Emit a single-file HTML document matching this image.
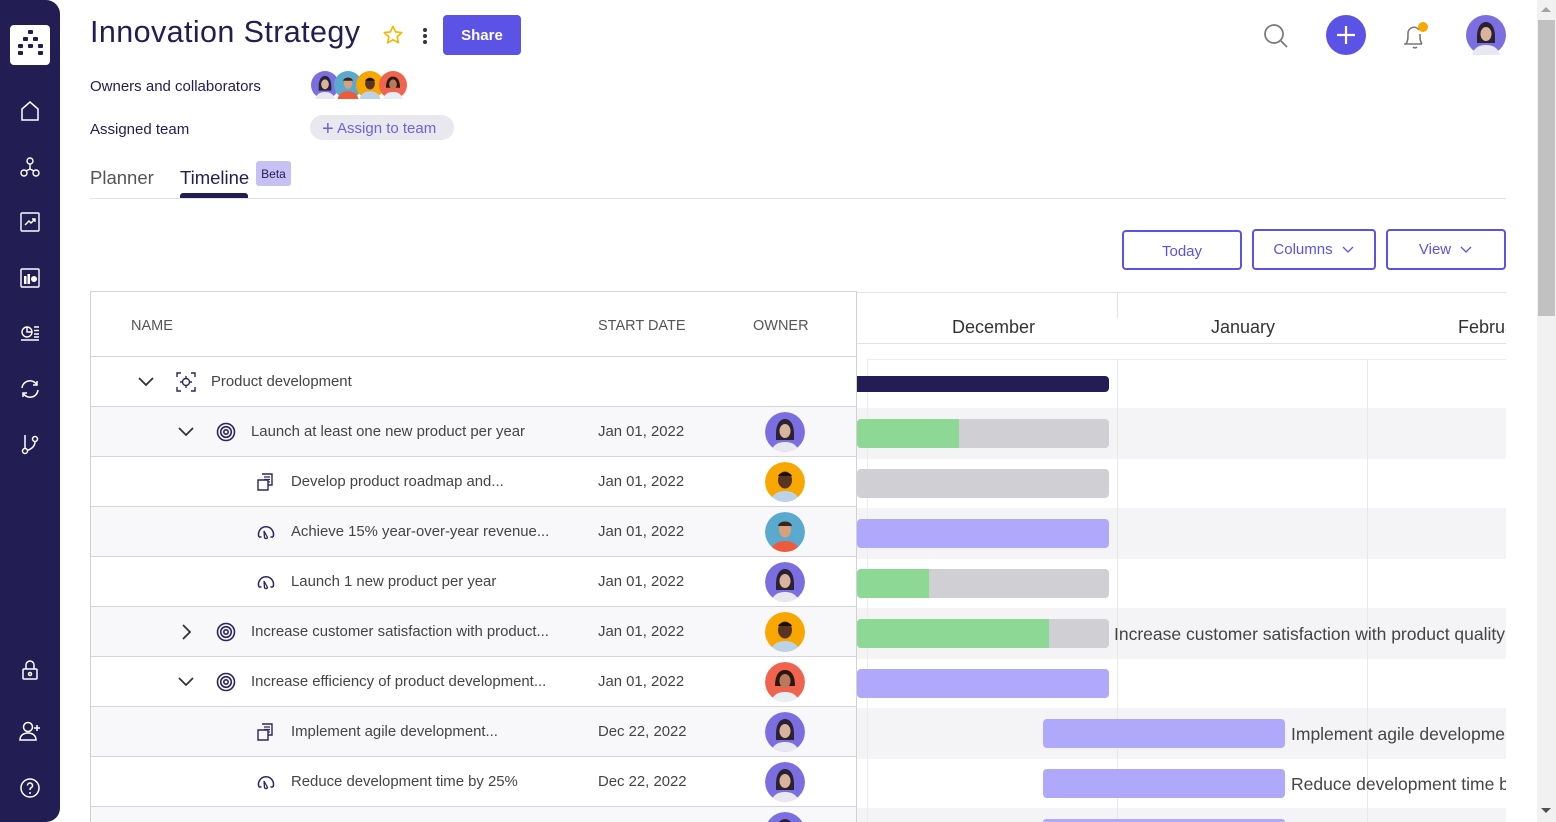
<!DOCTYPE html>
<html><head><meta charset="utf-8"><style>
*{margin:0;padding:0;box-sizing:border-box}
html{width:1556px;height:822px;overflow:hidden}
body{width:1556px;height:822px;overflow:hidden;background:#fff;font-family:"Liberation Sans",sans-serif;position:relative;color:#333}
.a{position:absolute}
.side{left:0;top:0;width:60px;height:822px;background:#221d52;border-radius:0 14px 14px 0}
.ic{position:absolute;left:19px;width:22px;height:22px}
.btn{position:absolute;border:2px solid #5b52e6;border-radius:4px;color:#5b52e6;font-size:15px;display:flex;align-items:center;justify-content:center;background:#fff}
.row{position:absolute;left:91px;width:765px;height:50px;border-bottom:1px solid #d6d6d6}
.sh{background:#f8f7fa}
.t{position:absolute;font-size:14.9px;color:#444;top:17px;white-space:nowrap}
.d{left:507px}
.band{position:absolute;left:857px;width:649px;height:51px;background:#f4f3f6}
.bar{position:absolute;height:29px;border-radius:4px;overflow:hidden}
.gl{position:absolute;font-size:17.5px;color:#444;white-space:nowrap}
.av{position:absolute;width:40px;height:40px;border-radius:50%;overflow:hidden}
</style></head><body>
<svg width="0" height="0" style="position:absolute">
<defs>
<symbol id="avp" viewBox="0 0 40 40"><circle cx="20" cy="20" r="20" fill="#7b6ee0"/><path d="M11 22c0-10 4-15 9-15s9 5 9 15v6H11z" fill="#2a2230"/><ellipse cx="20" cy="19" rx="5.5" ry="7" fill="#d9b39c"/><path d="M6 40c2-8 8-10 14-10s12 2 14 10z" fill="#e8e8f2"/></symbol>
<symbol id="avo" viewBox="0 0 40 40"><circle cx="20" cy="20" r="20" fill="#f7a700"/><ellipse cx="20" cy="18" rx="7" ry="8.5" fill="#5a3420"/><path d="M13 14c2-5 12-5 14 0" fill="#1a1010"/><path d="M5 40c2-8 8-11 15-11s13 3 15 11z" fill="#bcd2e8"/></symbol>
<symbol id="avt" viewBox="0 0 40 40"><circle cx="20" cy="20" r="20" fill="#5aa9cf"/><ellipse cx="20" cy="18" rx="6" ry="7.5" fill="#d9a07e"/><path d="M13 14c1-6 13-6 14 0" fill="#3a2518"/><path d="M5 40c2-8 8-11 15-11s13 3 15 11z" fill="#f05a3c"/></symbol>
<symbol id="avr" viewBox="0 0 40 40"><circle cx="20" cy="20" r="20" fill="#f0644f"/><path d="M10 24c0-11 4-16 10-16s10 5 10 16z" fill="#2a1810"/><ellipse cx="20" cy="19" rx="5.5" ry="7" fill="#b77a5a"/><path d="M6 40c2-8 8-10 14-10s12 2 14 10z" fill="#e7eef4"/></symbol>
<symbol id="tgt" viewBox="0 0 20 20"><circle cx="10" cy="10" r="8.5" fill="none" stroke="#2b2660" stroke-width="1.6"/><circle cx="10" cy="10" r="5.3" fill="none" stroke="#2b2660" stroke-width="1.6"/><circle cx="10" cy="10" r="2.2" fill="none" stroke="#2b2660" stroke-width="1.6"/></symbol>
<symbol id="doc" viewBox="0 0 20 20"><path d="M6 2h10v11H12" fill="none" stroke="#2b2660" stroke-width="1.4"/><path d="M2 8h10v10H2z" fill="none" stroke="#2b2660" stroke-width="1.4"/><path d="M8 5h6M8 7.5h6M12 10h2" stroke="#2b2660" stroke-width="1.2"/></symbol>
<symbol id="gau" viewBox="0 0 20 20"><path d="M3 15a7.5 7.5 0 1 1 14 0" fill="none" stroke="#2b2660" stroke-width="1.5"/><path d="M3 15h2.5M17 15h-2.5" stroke="#2b2660" stroke-width="1.5"/><path d="M8 9l3.5 6.5a1.6 1.6 0 0 1-3 0z" fill="none" stroke="#2b2660" stroke-width="1.3"/></symbol>
<symbol id="cd" viewBox="0 0 20 20"><path d="M3 6l7 7 7-7" fill="none" stroke="#333" stroke-width="1.8"/></symbol>
<symbol id="cr" viewBox="0 0 20 20"><path d="M7 3l7 7-7 7" fill="none" stroke="#333" stroke-width="1.8"/></symbol>
</defs></svg>

<div class="a side"></div>
<div class="a" style="left:10px;top:25px;width:40px;height:40px;background:#fff;border-radius:4px"></div>
<svg class="a" style="left:10px;top:25px" width="40" height="40"><g fill="#221d52"><rect x="18" y="5" width="5" height="4" rx="1"/><rect x="13" y="12" width="5" height="4" rx="1"/><rect x="23" y="12" width="5" height="4" rx="1"/><rect x="8" y="19" width="5" height="4" rx="1"/><rect x="18" y="19" width="5" height="4" rx="1"/><rect x="28" y="19" width="5" height="4" rx="1"/><rect x="8" y="26" width="5" height="4" rx="1"/><rect x="28" y="26" width="5" height="4" rx="1"/></g></svg>
<svg class="ic" style="top:100px" viewBox="0 0 22 22"><path d="M3 9l8-7 8 7v11H3z" fill="none" stroke="#fff" stroke-width="1.5"/></svg>
<svg class="ic" style="top:156px" viewBox="0 0 22 22"><g fill="none" stroke="#fff" stroke-width="1.4"><circle cx="11" cy="5" r="3"/><circle cx="5" cy="17" r="3"/><circle cx="17" cy="17" r="3"/><path d="M11 8v5M11 13l-4 2M11 13l4 2"/></g></svg>
<svg class="ic" style="top:211px" viewBox="0 0 22 22"><g fill="none" stroke="#fff" stroke-width="1.4"><rect x="2" y="2" width="18" height="18" rx="1"/><path d="M6 14l4-4 2 2 4-4M13 8h3v3"/></g></svg>
<svg class="ic" style="top:267px" viewBox="0 0 22 22"><g fill="none" stroke="#fff" stroke-width="1.4"><rect x="2" y="2" width="18" height="18" rx="1"/></g><g fill="#fff"><rect x="5" y="9" width="2.5" height="8"/><rect x="8.5" y="7" width="2.5" height="10"/><circle cx="15" cy="12" r="3"/></g></svg>
<svg class="ic" style="top:322px" viewBox="0 0 22 22"><g fill="none" stroke="#fff" stroke-width="1.4"><circle cx="8" cy="10" r="5"/><path d="M8 5v5h5M2 18h18M15 5h5M15 8.5h5M15 12h5M15 15h5"/></g></svg>
<svg class="ic" style="top:378px" viewBox="0 0 22 22"><g fill="none" stroke="#fff" stroke-width="1.5"><path d="M3 10a8 8 0 0 1 15-3M19 12a8 8 0 0 1-15 3"/><path d="M18 3v4h-4M4 19v-4h4"/></g></svg>
<svg class="ic" style="top:433px" viewBox="0 0 22 22"><g fill="none" stroke="#fff" stroke-width="1.5"><path d="M6 2v13"/><circle cx="6" cy="18" r="2.5"/><circle cx="16" cy="6" r="2.5"/><path d="M16 8.5c0 6-5 8-8 9"/></g></svg>
<svg class="ic" style="top:659px" viewBox="0 0 22 22"><g fill="none" stroke="#fff" stroke-width="1.5"><rect x="4" y="10" width="14" height="10" rx="1"/><path d="M7 10V6a4 4 0 0 1 8 0v4"/><circle cx="11" cy="15" r="1.5"/></g></svg>
<svg class="ic" style="top:720px" viewBox="0 0 22 22"><g fill="none" stroke="#fff" stroke-width="1.5"><circle cx="9" cy="7" r="4.5"/><path d="M1 20c0-5 4-7 8-7s8 2 8 7zM18 5v6M15 8h6"/></g></svg>
<svg class="ic" style="top:777px" viewBox="0 0 22 22"><g fill="none" stroke="#fff" stroke-width="1.5"><circle cx="11" cy="11" r="9"/><path d="M8.5 8.5a2.5 2.5 0 1 1 3.5 2.3c-1 .5-1 1-1 2.2"/></g><circle cx="11" cy="16" r="1" fill="#fff"/></svg>

<div class="a" style="left:90px;top:15px;font-size:30.5px;color:#221d52;letter-spacing:0.4px">Innovation Strategy</div>
<svg class="a" style="left:382px;top:24px" width="22" height="22" viewBox="0 0 24 24"><path d="M12 2.5l2.9 6.2 6.6.7-5 4.5 1.4 6.6L12 17.2l-5.9 3.3 1.4-6.6-5-4.5 6.6-.7z" fill="none" stroke="#f5b800" stroke-width="1.8" stroke-linejoin="round"/></svg>
<div class="a" style="left:423px;top:28px;width:4px;height:4px;background:#333;border-radius:50%;box-shadow:0 6px 0 #333,0 12px 0 #333"></div>
<div class="a" style="left:443px;top:15px;width:78px;height:40px;background:#5b52e6;border-radius:4px;color:#fff;font-size:15px;font-weight:bold;display:flex;align-items:center;justify-content:center">Share</div>

<div class="a" style="left:90px;top:78px;font-size:15px;color:#221d52">Owners and collaborators</div>
<svg class="a" style="left:311px;top:71px" width="28" height="28"><use href="#avp"/></svg>
<svg class="a" style="left:334px;top:71px" width="28" height="28"><use href="#avt"/></svg>
<svg class="a" style="left:356px;top:71px" width="28" height="28"><use href="#avo"/></svg>
<svg class="a" style="left:379px;top:71px" width="28" height="28"><use href="#avr"/></svg>
<div class="a" style="left:90px;top:121px;font-size:15px;color:#221d52">Assigned team</div>
<div class="a" style="left:310px;top:115px;width:144px;height:25px;background:#e9e8ee;border-radius:13px;color:#6b62e0;font-size:15px;line-height:27px;padding-left:12px"><span style="font-size:20px;vertical-align:-2px">+</span> Assign to team</div>

<div class="a" style="left:90px;top:167px;font-size:18.5px;color:#555">Planner</div>
<div class="a" style="left:180px;top:167px;font-size:18.5px;color:#221d52">Timeline</div>
<div class="a" style="left:256px;top:161px;width:35px;height:25px;background:#c7c0f5;border-radius:3px;font-size:12px;color:#221d52;line-height:27px;text-align:center">Beta</div>
<div class="a" style="left:180px;top:193px;width:68px;height:5px;background:#221d52;border-radius:3px 3px 0 0"></div>
<div class="a" style="left:90px;top:198px;width:1416px;height:1px;background:#e2e2e2"></div>

<svg class="a" style="left:1262px;top:22px" width="28" height="28" viewBox="0 0 28 28"><circle cx="12" cy="12" r="9" fill="none" stroke="#777" stroke-width="1.7"/><path d="M19 19l6 6" stroke="#777" stroke-width="1.7"/></svg>
<div class="a" style="left:1326px;top:15px;width:40px;height:40px;border-radius:50%;background:#5b52e6"></div>
<svg class="a" style="left:1326px;top:15px" width="40" height="40"><path d="M20 11v18M11 20h18" stroke="#fff" stroke-width="2.2"/></svg>
<svg class="a" style="left:1400px;top:18px" width="32" height="34" viewBox="0 0 32 34"><path d="M4 26h18M6 26c2-3 2-6 2-11a6 6 0 0 1 11-3M20 16c0 5 0 7 2 10M13 29a3 3 0 0 0 4 0" fill="none" stroke="#777" stroke-width="1.6"/><circle cx="23" cy="9" r="5" fill="#f7a700"/></svg>
<svg class="a" style="left:1466px;top:15px" width="40" height="40"><use href="#avp"/></svg>

<div class="a" style="left:1537px;top:0;width:19px;height:822px;background:#f1f1f1"></div>
<div class="a" style="left:1538px;top:20px;width:17px;height:296px;background:#c1c1c1"></div>
<div class="a" style="left:1541px;top:7px;border:5px solid transparent;border-bottom:5px solid #a3a3a3;border-top:0"></div>
<div class="a" style="left:1541px;top:808px;border:5px solid transparent;border-top:5px solid #505050;border-bottom:0"></div>

<div class="btn" style="left:1122px;top:230px;width:120px;height:40px;padding-top:2px">Today</div>
<div class="btn" style="left:1252px;top:229px;width:124px;height:41px">Columns <svg width="14" height="10" style="margin-left:8px"><path d="M2 2l5 5 5-5" fill="none" stroke="#5b52e6" stroke-width="1.3"/></svg></div>
<div class="btn" style="left:1386px;top:229px;width:120px;height:41px">View <svg width="14" height="10" style="margin-left:8px"><path d="M2 2l5 5 5-5" fill="none" stroke="#5b52e6" stroke-width="1.3"/></svg></div>

<!-- table -->
<div class="a" style="left:90px;top:291px;width:767px;height:531px;border:1px solid #d2d2d2;border-bottom:0"></div>
<div class="a" style="left:91px;top:356px;width:765px;height:1px;background:#d2d2d2"></div>
<div class="a" style="left:131px;top:318px;font-size:14.5px;color:#555">NAME</div>
<div class="a" style="left:598px;top:318px;font-size:14.5px;color:#555">START DATE</div>
<div class="a" style="left:753px;top:318px;font-size:14.5px;color:#555">OWNER</div>

<!-- gantt backgrounds -->
<div class="a" style="left:857px;top:292px;width:649px;height:1px;background:#e2e2e2"></div>
<div class="a" style="left:857px;top:343px;width:649px;height:1px;background:#e2e2e2"></div>
<div class="a" style="left:1117px;top:292px;width:1px;height:26px;background:#e2e2e2"></div>
<div class="a" style="left:952px;top:317px;font-size:18px;color:#333">December</div>
<div class="a" style="left:1211px;top:317px;font-size:18px;color:#333">January</div>
<div class="a" style="left:1458px;top:317px;font-size:18px;color:#333;width:48px;overflow:hidden;white-space:nowrap">February</div>
<div class="a" style="left:867px;top:359px;width:639px;height:1px;background:#ececec"></div>
<div class="band" style="top:408px"></div>
<div class="band" style="top:508px"></div>
<div class="band" style="top:608px"></div>
<div class="band" style="top:708px"></div>
<div class="band" style="top:808px;height:14px"></div>
<div class="a" style="left:867px;top:359px;width:1px;height:463px;background:#ececec"></div>
<div class="a" style="left:1117px;top:359px;width:1px;height:463px;background:#e8e8e8"></div>
<div class="a" style="left:1367px;top:359px;width:1px;height:463px;background:#e8e8e8"></div>

<!-- rows -->
<div class="row" style="top:357px"><svg class="a" style="left:45px;top:15px" width="20" height="20"><use href="#cd"/></svg>
<svg class="a" style="left:85px;top:15px" width="20" height="20" viewBox="0 0 20 20"><g fill="none" stroke="#2b2660" stroke-width="1.4"><path d="M1 5V1h4M15 1h4v4M19 15v4h-4M5 19H1v-4"/><circle cx="10" cy="10" r="3.5"/><path d="M10 4v2.5M10 13.5V16M4 10h2.5M13.5 10H16"/></g></svg>
<div class="t" style="left:120px">Product development</div></div>

<div class="row sh" style="top:407px"><svg class="a" style="left:85px;top:15px" width="20" height="20"><use href="#cd"/></svg><svg class="a" style="left:125px;top:15px" width="20" height="20"><use href="#tgt"/></svg><div class="t" style="left:160px">Launch at least one new product per year</div><div class="t d">Jan 01, 2022</div><svg class="av" style="left:674px;top:5px" width="40" height="40"><use href="#avp"/></svg></div>

<div class="row" style="top:457px"><svg class="a" style="left:165px;top:15px" width="20" height="20"><use href="#doc"/></svg><div class="t" style="left:200px">Develop product roadmap and...</div><div class="t d">Jan 01, 2022</div><svg class="av" style="left:674px;top:5px" width="40" height="40"><use href="#avo"/></svg></div>

<div class="row sh" style="top:507px"><svg class="a" style="left:165px;top:15px" width="20" height="20"><use href="#gau"/></svg><div class="t" style="left:200px">Achieve 15% year-over-year revenue...</div><div class="t d">Jan 01, 2022</div><svg class="av" style="left:674px;top:5px" width="40" height="40"><use href="#avt"/></svg></div>

<div class="row" style="top:557px"><svg class="a" style="left:165px;top:15px" width="20" height="20"><use href="#gau"/></svg><div class="t" style="left:200px">Launch 1 new product per year</div><div class="t d">Jan 01, 2022</div><svg class="av" style="left:674px;top:5px" width="40" height="40"><use href="#avp"/></svg></div>

<div class="row sh" style="top:607px"><svg class="a" style="left:85px;top:15px" width="20" height="20"><use href="#cr"/></svg><svg class="a" style="left:125px;top:15px" width="20" height="20"><use href="#tgt"/></svg><div class="t" style="left:160px">Increase customer satisfaction with product...</div><div class="t d">Jan 01, 2022</div><svg class="av" style="left:674px;top:5px" width="40" height="40"><use href="#avo"/></svg></div>

<div class="row" style="top:657px"><svg class="a" style="left:85px;top:15px" width="20" height="20"><use href="#cd"/></svg><svg class="a" style="left:125px;top:15px" width="20" height="20"><use href="#tgt"/></svg><div class="t" style="left:160px">Increase efficiency of product development...</div><div class="t d">Jan 01, 2022</div><svg class="av" style="left:674px;top:5px" width="40" height="40"><use href="#avr"/></svg></div>

<div class="row sh" style="top:707px"><svg class="a" style="left:165px;top:15px" width="20" height="20"><use href="#doc"/></svg><div class="t" style="left:200px">Implement agile development...</div><div class="t d">Dec 22, 2022</div><svg class="av" style="left:674px;top:5px" width="40" height="40"><use href="#avp"/></svg></div>

<div class="row" style="top:757px"><svg class="a" style="left:165px;top:15px" width="20" height="20"><use href="#gau"/></svg><div class="t" style="left:200px">Reduce development time by 25%</div><div class="t d">Dec 22, 2022</div><svg class="av" style="left:674px;top:5px" width="40" height="40"><use href="#avp"/></svg></div>

<div class="row sh" style="top:807px;height:15px;border:0;overflow:hidden"><svg class="av" style="left:674px;top:5px" width="40" height="40"><use href="#avp"/></svg></div>

<!-- bars -->
<div class="bar" style="left:857px;top:376px;width:252px;height:16px;background:#221d52;border-radius:0 4px 4px 0"></div>
<div class="bar" style="left:857px;top:419px;width:252px;background:#d0cfd3"><div style="width:102px;height:100%;background:#8cd894"></div></div>
<div class="bar" style="left:857px;top:469px;width:252px;background:#d0cfd3"></div>
<div class="bar" style="left:857px;top:519px;width:252px;background:#b0a8fb"></div>
<div class="bar" style="left:857px;top:569px;width:252px;background:#d0cfd3"><div style="width:72px;height:100%;background:#8cd894"></div></div>
<div class="bar" style="left:857px;top:619px;width:252px;background:#d0cfd3"><div style="width:192px;height:100%;background:#8cd894"></div></div>
<div class="gl" style="left:1114px;top:624px">Increase customer satisfaction with product quality</div>
<div class="bar" style="left:857px;top:669px;width:252px;background:#b0a8fb"></div>
<div class="bar" style="left:1043px;top:719px;width:242px;background:#b0a8fb"></div>
<div class="gl" style="left:1291px;top:724px;width:215px;overflow:hidden">Implement agile development</div>
<div class="bar" style="left:1043px;top:769px;width:242px;background:#b0a8fb"></div>
<div class="gl" style="left:1291px;top:774px;width:215px;overflow:hidden">Reduce development time by 25%</div>
<div class="bar" style="left:1043px;top:819px;width:242px;height:3px;background:#b0a8fb;border-radius:4px 4px 0 0"></div>
</body></html>
